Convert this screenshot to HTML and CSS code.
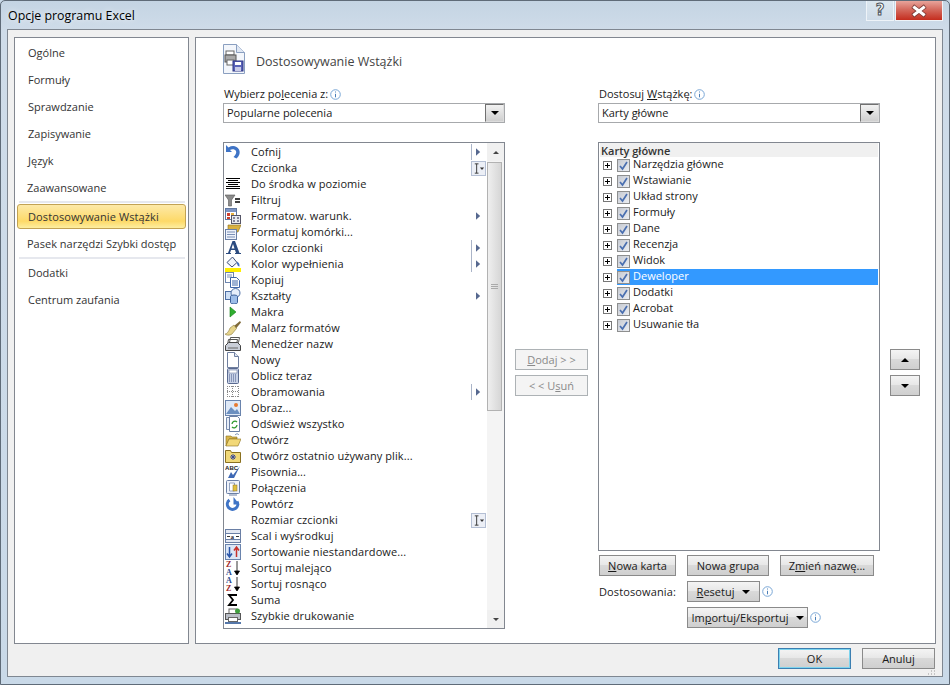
FILE: index.html
```html
<!DOCTYPE html>
<html lang="pl">
<head>
<meta charset="utf-8">
<title>Opcje programu Excel</title>
<link rel="stylesheet" href="styles.css">
</head>
<body>
<svg class="defs" aria-hidden="true">
  <symbol id="tri" viewBox="0 0 6 9"><path d="M0 0l5 4.500L0 9z" fill="#56688f"/></symbol>
  <symbol id="ibeam" viewBox="0 0 14 14"><path d="M3 2h4M3 12h4M5 2v10" stroke="#333" fill="none"/><path d="M8.500 6h4.500l-2.200 2.500z" fill="#333"/></symbol>
  <symbol id="info" viewBox="0 0 11 11"><circle cx="5.500" cy="5.500" r="4.800" fill="#fff" stroke="#7aa7d6"/><path d="M5.500 2.500v1M5.500 4.800v3.500" stroke="#4a7fb8"/></symbol>
  <symbol id="check" viewBox="0 0 11 11"><path d="M2 6l2.500 3L9 2" fill="none" stroke="#4a6fb0" stroke-width="1.700"/></symbol>
  <symbol id="plus" viewBox="0 0 9 9"><rect x=".5" y=".5" width="8" height="8" fill="#fff" stroke="#777"/><path d="M2 4.500h5M4.500 2v5" stroke="#000"/></symbol>
</svg>
<div class="window">
  <header class="titlebar">
    <div class="title">Opcje programu Excel</div>
    <div class="caption">
      <div class="cap-help">?</div>
      <div class="cap-close"><svg class="cap-x" viewBox="0 0 14 10"><path d="M2.500 1.500l9 7M11.500 1.500l-9 7" stroke="#7a3a35" stroke-width="4.500" stroke-linecap="square"/><path d="M2.500 1.500l9 7M11.500 1.500l-9 7" stroke="#fff" stroke-width="3" stroke-linecap="square"/></svg></div>
    </div>
  </header>
  <div class="client">
    <div class="panels">
      <nav class="sidebar">
        <div class="nav-item">Ogólne</div>
        <div class="nav-item">Formuły</div>
        <div class="nav-item">Sprawdzanie</div>
        <div class="nav-item">Zapisywanie</div>
        <div class="nav-item">Język</div>
        <div class="nav-item nav-tight">Zaawansowane</div>
        <div class="nav-sep"></div>
        <div class="nav-selected">Dostosowywanie Wstążki</div>
        <div class="nav-item nav-tight nav-pasek">Pasek narzędzi Szybki dostęp</div>
        <div class="nav-sep"></div>
        <div class="nav-item">Dodatki</div>
        <div class="nav-item">Centrum zaufania</div>
      </nav>
      <main class="main">
        <div class="head">
          <svg class="head-icon" viewBox="0 0 22 30"><path d="M.5.500h13l8 8v21H.500z" fill="#f3f6fb" stroke="#8a9fc0"/><path d="M13.500.500v8h8" fill="#dfe7f3" stroke="#8a9fc0"/><rect x="3" y="7" width="8" height="4" fill="#fff" stroke="#666"/><rect x="2" y="11" width="11" height="7" fill="#a9a9a9" stroke="#555"/><rect x="4" y="16" width="7" height="5" fill="#fff" stroke="#666"/><rect x="10" y="17" width="10" height="10" fill="#5a63b8" stroke="#2d3585"/><rect x="12" y="18" width="6" height="3" fill="#fff"/><rect x="12" y="23" width="6" height="4" fill="#c9cce8"/></svg>
          <div class="head-text">Dostosowywanie Wstążki</div>
        </div>
        <div class="columns">
          <section class="col">
            <div class="label">Wybierz po<u>l</u>ecenia z:<svg class="info"><use href="#info"/></svg></div>
            <div class="combo"><span class="combo-text">Popularne polecenia</span><span class="combo-btn"><i class="down"></i></span></div>
            <div class="cmdlist">
              <div class="cmds">
                <div class="cmd"><svg class="ic" viewBox="0 0 16 16"><path d="M1 1v7h6L5 6c2-1.500 5-1 6 1 .8 2-.5 4-2.500 6l3 1.500c3-2.500 4-6 2.500-9C12 2 7.500 1 3.500 3.500z" fill="#3f74c6"/></svg><span>Cofnij</span><span class="mark split"><svg class="tri"><use href="#tri"/></svg></span></div>
                <div class="cmd"><span class="ic"></span><span>Czcionka</span><span class="mark beam"><svg class="beam-ic"><use href="#ibeam"/></svg></span></div>
                <div class="cmd"><svg class="ic" viewBox="0 0 16 16"><path d="M1 2.500h14M3 4.500h10M1 6.500h14M3 8.500h10M1 10.500h14M1 12.500h14" stroke="#000"/></svg><span>Do środka w poziomie</span></div>
                <div class="cmd"><svg class="ic" viewBox="0 0 16 16"><path d="M0 3h10L6.500 8v6h-3V8z" fill="#8c8c8c" stroke="#555" stroke-width=".6"/><path d="M10 7h5M10 10h5" stroke="#000" stroke-width="1.400"/></svg><span>Filtruj</span></div>
                <div class="cmd"><svg class="ic" viewBox="0 0 16 16"><rect x=".5" y=".5" width="11" height="11" fill="#fff" stroke="#6077a0"/><path d="M1 1h10v3H1z" fill="#7d95c4"/><path d="M2 5h3v3H2z" fill="#d04030"/><path d="M6 5h3v3H6z" fill="#e8b040"/><path d="M2 9h3v2H2z" fill="#c8402f"/><rect x="6.500" y="7.500" width="9" height="8" fill="#e8ebf0" stroke="#556"/><path d="M8 10h2M8 13h2M12 10h2M12 13h2" stroke="#224"/></svg><span>Formatow. warunk.</span><span class="mark"><svg class="tri"><use href="#tri"/></svg></span></div>
                <div class="cmd"><svg class="ic" viewBox="0 0 16 16"><path d="M3 1l13 0-3 7H3z" fill="#d8b040" stroke="#8a7020" stroke-width=".6"/><rect x=".5" y="5.500" width="11" height="10" fill="#eef2fa" stroke="#6a7fa5"/><path d="M2 8h8M2 10.500h8M2 13h8" stroke="#7a8fb5"/></svg><span>Formatuj komórki...</span></div>
                <div class="cmd"><svg class="ic" viewBox="0 0 16 16"><path d="M1 14h5v-1H5l1-3h4l1 3h-1v1h6v-1h-1.500L10 1H7.500L3 13H1zM6.500 8.500L8 4l1.500 4.500z" fill="#2a4a7f" fill-rule="evenodd"/></svg><span>Kolor czcionki</span><span class="mark split"><svg class="tri"><use href="#tri"/></svg></span></div>
                <div class="cmd"><svg class="ic" viewBox="0 0 16 16"><path d="M2 6.500L7.500 1 12 6.500 7 11z" fill="#eef3fa" stroke="#3f4f78"/><path d="M12 5.500c2.500 1.500 2.500 3 2.500 5-1.500 0-3-2-2.500-5z" fill="#3f6fc0"/><rect y="12" width="16" height="4" fill="#ffef00"/></svg><span>Kolor wypełnienia</span><span class="mark split"><svg class="tri"><use href="#tri"/></svg></span></div>
                <div class="cmd"><svg class="ic" viewBox="0 0 16 16"><rect x=".5" y=".5" width="8" height="10" fill="#fff" stroke="#6e86b0"/><path d="M2 3h5M2 5h5" stroke="#7a8fb5"/><path d="M5.500 5.500h6l3 3v7h-9z" fill="#fff" stroke="#3f66a8"/><path d="M7 9h6M7 11h6M7 13h6" stroke="#3f66a8"/></svg><span>Kopiuj</span></div>
                <div class="cmd"><svg class="ic" viewBox="0 0 16 16"><rect x=".5" y="3.500" width="9" height="8" fill="#cfe0f5" stroke="#4d6fa5"/><circle cx="10.500" cy="5" r="4.500" fill="#e6eefa" stroke="#4d6fa5"/><path d="M5.500 8.500a3.500 1.500 0 0 1 7 0v6a3.500 1.500 0 0 1-7 0z" fill="#9dbde8" stroke="#3d5f98"/></svg><span>Kształty</span><span class="mark"><svg class="tri"><use href="#tri"/></svg></span></div>
                <div class="cmd"><svg class="ic" viewBox="0 0 16 16"><path d="M5 3l6 5-6 5z" fill="#2fae2f" stroke="#14801a" stroke-width=".6"/></svg><span>Makra</span></div>
                <div class="cmd"><svg class="ic" viewBox="0 0 16 16"><path d="M9 6L15 1l1 1.500-5 6z" fill="#7f6a3a"/><path d="M9 5l2.500 3.500L7 14C4 16 1 15 0 14c2 0 4-3 5-6z" fill="#e6d48c" stroke="#8a7a3a" stroke-width=".6"/></svg><span>Malarz formatów</span></div>
                <div class="cmd"><svg class="ic" viewBox="0 0 16 16"><path d="M5.500 1.500h9l-1 5h-9zM3.500 3.500h9l-1 5h-9z" fill="#fff" stroke="#555"/><path d="M.5 9.500l3-3h9l3 3v5H.500z" fill="#c9ced8" stroke="#444"/><path d="M3 12h10" stroke="#666"/></svg><span>Menedżer nazw</span></div>
                <div class="cmd"><svg class="ic" viewBox="0 0 16 16"><path d="M2.500.5h7l4 4v11h-11z" fill="#fff" stroke="#6f7f9f"/><path d="M9.500.5v4h4" fill="#dfe6f2" stroke="#6f7f9f"/></svg><span>Nowy</span></div>
                <div class="cmd"><svg class="ic" viewBox="0 0 16 16"><rect x="2.500" y=".5" width="11" height="15" rx="1" fill="#c8d2e6" stroke="#5a6a90"/><rect x="4" y="2" width="8" height="3" fill="#fff" stroke="#5a6a90" stroke-width=".5"/><path d="M4 7h8M4 9h8M4 11h8M4 13h8" stroke="#46598a" stroke-dasharray="1 1"/></svg><span>Oblicz teraz</span></div>
                <div class="cmd"><svg class="ic" viewBox="0 0 16 16"><path d="M2 2.500h12M2 7.500h12M2 12.500h12M2.500 2v11M7.500 2v11M13.500 2v11" stroke="#8a8a8a" stroke-dasharray="1 1"/></svg><span>Obramowania</span><span class="mark split"><svg class="tri"><use href="#tri"/></svg></span></div>
                <div class="cmd"><svg class="ic" viewBox="0 0 16 16"><rect x=".5" y=".5" width="15" height="15" fill="#dfe9f7" stroke="#6a84ad"/><circle cx="11" cy="5" r="2" fill="#e87a30"/><path d="M1 14l5-7 4 4 2-2 3 5z" fill="#6b8fc0"/></svg><span>Obraz...</span></div>
                <div class="cmd"><svg class="ic" viewBox="0 0 16 16"><path d="M1.500 1.500h6v12h-6z" fill="#e8eef8" stroke="#7a8dae"/><path d="M4.500.5h8l2 2v13h-10z" fill="#fff" stroke="#6a7fa5"/><path d="M7 8a3 3 0 0 1 5-2M12 9a3 3 0 0 1-5 2" fill="none" stroke="#2f9a2f" stroke-width="1.300"/></svg><span>Odśwież wszystko</span></div>
                <div class="cmd"><svg class="ic" viewBox="0 0 16 16"><path d="M1 14V4h5l1 1h5v2H4l-3 7z" fill="#d8b54a" stroke="#8a7020" stroke-width=".6"/><path d="M1 14l3-7h12l-3 7z" fill="#f2d878" stroke="#8a7020" stroke-width=".6"/><path d="M10 3c2-2 3-1 4 0" fill="none" stroke="#6a84ad"/></svg><span>Otwórz</span></div>
                <div class="cmd"><svg class="ic" viewBox="0 0 16 16"><path d="M.5 14.500v-12h5l1 2h9v10z" fill="#f0d878" stroke="#8a7020"/><path d="M8 6v6M5 9h6M6 7l4 4M10 7l-4 4" stroke="#3a4a9a"/></svg><span>Otwórz ostatnio używany plik...</span></div>
                <div class="cmd"><svg class="ic" viewBox="0 0 16 16"><path d="M3 14L6 8l2 3 7-9-6 12z" fill="#3f69b5"/><text class="abc" x="0" y="6">ABC</text></svg><span>Pisownia...</span></div>
                <div class="cmd"><svg class="ic" viewBox="0 0 16 16"><rect x="1.500" y=".5" width="13" height="13" rx="1" fill="#eef2fa" stroke="#6a7fa5"/><path d="M4.500 3h5v8h-5z" fill="#fff" stroke="#6a7fa5" stroke-width=".7"/><rect x="8" y="5" width="4" height="6" fill="#e0c040" stroke="#8a7020" stroke-width=".5"/><path d="M4 15h8" stroke="#6a7fa5"/></svg><span>Połączenia</span></div>
                <div class="cmd"><svg class="ic" viewBox="0 0 16 16"><path d="M4.500 4A5.200 5.200 0 1 0 12 5.500" fill="none" stroke="#3f74c6" stroke-width="3"/><path d="M8.500 1v7.500h6z" fill="#3f74c6"/></svg><span>Powtórz</span></div>
                <div class="cmd"><span class="ic"></span><span>Rozmiar czcionki</span><span class="mark beam"><svg class="beam-ic"><use href="#ibeam"/></svg></span></div>
                <div class="cmd"><svg class="ic" viewBox="0 0 16 16"><rect x=".5" y="1.500" width="15" height="13" fill="#e3e8f2" stroke="#6a7fa5"/><path d="M1 5.500h14M1 11.500h14" stroke="#6a7fa5"/><rect x="1" y="6" width="14" height="5" fill="#fff"/><path d="M2 8.500h3M11 8.500h3" stroke="#333"/><text class="tiny" x="5.500" y="10.500">a</text></svg><span>Scal i wyśrodkuj</span></div>
                <div class="cmd"><svg class="ic" viewBox="0 0 16 16"><rect x=".5" y=".5" width="15" height="15" fill="#dbe6f6" stroke="#6a84ad"/><path d="M4.500 3v9M2 9.500L4.500 13 7 9.500" fill="none" stroke="#2a55a8" stroke-width="1.500"/><path d="M11.500 13V4M9 6.500L11.500 3 14 6.500" fill="none" stroke="#c8302a" stroke-width="1.500"/></svg><span>Sortowanie niestandardowe...</span></div>
                <div class="cmd"><svg class="ic" viewBox="0 0 16 16"><text class="sort sort-r" x="1" y="7">Z</text><text class="sort sort-b" x="1" y="15">A</text><path d="M12 1v13M9.500 11l2.500 4 2.500-4z" stroke="#000" stroke-width=".8"/></svg><span>Sortuj malejąco</span></div>
                <div class="cmd"><svg class="ic" viewBox="0 0 16 16"><text class="sort sort-b" x="1" y="7">A</text><text class="sort sort-r" x="1" y="15">Z</text><path d="M12 1v13M9.500 11l2.500 4 2.500-4z" stroke="#000" stroke-width=".8"/></svg><span>Sortuj rosnąco</span></div>
                <div class="cmd"><svg class="ic" viewBox="0 0 16 16"><path d="M12 3H4l4 5-4 5h8" fill="none" stroke="#000" stroke-width="1.800"/></svg><span>Suma</span></div>
                <div class="cmd"><svg class="ic" viewBox="0 0 16 16"><rect x="4" y="1" width="8" height="5" fill="#fff" stroke="#666"/><rect x=".5" y="5.500" width="15" height="6" fill="#b8bdc6" stroke="#555"/><rect x="3.500" y="9.500" width="9" height="4" fill="#fff" stroke="#666"/><circle cx="12.500" cy="3" r="2.500" fill="#3fa03f"/><path d="M0 15h16" stroke="#5577aa" stroke-width="2"/></svg><span>Szybkie drukowanie</span></div>
              </div>
              <div class="scrollbar">
                <div class="sb-btn"><i class="sb-up"></i></div>
                <div class="sb-track"><div class="sb-thumb"><i class="sb-grip"></i></div></div>
                <div class="sb-btn"><i class="sb-down"></i></div>
              </div>
            </div>
          </section>
          <section class="col-mid">
            <button class="btn btn-wide btn-off"><span><u>D</u>odaj &gt; &gt;</span></button>
            <button class="btn btn-wide btn-off"><span>&lt; &lt; U<u>s</u>uń</span></button>
          </section>
          <section class="col">
            <div class="label">Dostosuj <u>W</u>stążkę:<svg class="info"><use href="#info"/></svg></div>
            <div class="combo"><span class="combo-text">Karty główne</span><span class="combo-btn"><i class="down"></i></span></div>
            <div class="tree">
              <div class="tree-head">Karty główne</div>
              <div class="node"><svg class="plus"><use href="#plus"/></svg><div class="node-body"><span class="cb"><svg class="cb-ic"><use href="#check"/></svg></span><span class="node-text">Narzędzia główne</span></div></div>
              <div class="node"><svg class="plus"><use href="#plus"/></svg><div class="node-body"><span class="cb"><svg class="cb-ic"><use href="#check"/></svg></span><span class="node-text">Wstawianie</span></div></div>
              <div class="node"><svg class="plus"><use href="#plus"/></svg><div class="node-body"><span class="cb"><svg class="cb-ic"><use href="#check"/></svg></span><span class="node-text">Układ strony</span></div></div>
              <div class="node"><svg class="plus"><use href="#plus"/></svg><div class="node-body"><span class="cb"><svg class="cb-ic"><use href="#check"/></svg></span><span class="node-text">Formuły</span></div></div>
              <div class="node"><svg class="plus"><use href="#plus"/></svg><div class="node-body"><span class="cb"><svg class="cb-ic"><use href="#check"/></svg></span><span class="node-text">Dane</span></div></div>
              <div class="node"><svg class="plus"><use href="#plus"/></svg><div class="node-body"><span class="cb"><svg class="cb-ic"><use href="#check"/></svg></span><span class="node-text">Recenzja</span></div></div>
              <div class="node"><svg class="plus"><use href="#plus"/></svg><div class="node-body"><span class="cb"><svg class="cb-ic"><use href="#check"/></svg></span><span class="node-text">Widok</span></div></div>
              <div class="node"><svg class="plus"><use href="#plus"/></svg><div class="node-body node-sel"><span class="cb"><svg class="cb-ic"><use href="#check"/></svg></span><span class="node-text">Deweloper</span></div></div>
              <div class="node"><svg class="plus"><use href="#plus"/></svg><div class="node-body"><span class="cb"><svg class="cb-ic"><use href="#check"/></svg></span><span class="node-text">Dodatki</span></div></div>
              <div class="node"><svg class="plus"><use href="#plus"/></svg><div class="node-body"><span class="cb"><svg class="cb-ic"><use href="#check"/></svg></span><span class="node-text">Acrobat</span></div></div>
              <div class="node"><svg class="plus"><use href="#plus"/></svg><div class="node-body"><span class="cb"><svg class="cb-ic"><use href="#check"/></svg></span><span class="node-text">Usuwanie tła</span></div></div>
            </div>
            <div class="btn-row">
              <button class="btn btn-karta"><span><u>N</u>owa karta</span></button>
              <button class="btn btn-grupa"><span>Nowa <u>g</u>rupa</span></button>
              <button class="btn btn-zmien"><span>Z<u>m</u>ień nazwę...</span></button>
            </div>
            <div class="custom-row">
              <span class="custom-label">Dostosowania:</span>
              <button class="btn btn-reset"><span><u>R</u>esetuj</span><i class="down"></i></button>
              <svg class="info info-btn"><use href="#info"/></svg>
            </div>
            <div class="custom-row custom-second">
              <button class="btn btn-import"><span>Im<u>p</u>ortuj/Eksportuj</span><i class="down"></i></button>
              <svg class="info info-btn"><use href="#info"/></svg>
            </div>
          </section>
          <section class="col-arrows">
            <button class="btn btn-arrow"><i class="up"></i></button>
            <button class="btn btn-arrow"><i class="down"></i></button>
          </section>
        </div>
      </main>
    </div>
    <footer class="actions">
      <button class="btn btn-action btn-default">OK</button>
      <button class="btn btn-action">Anuluj</button>
      <svg class="grip" viewBox="0 0 10 10"><path d="M8 2h1M5 5h1M8 5h1M2 8h1M5 8h1M8 8h1" stroke="#999"/></svg>
    </footer>
  </div>
</div>
</body>
</html>
```
FILE: styles.css
```css
* { box-sizing: border-box; }
html, body { margin: 0; padding: 0; }
body { font: 11px/16px "Open Sans", sans-serif; color: #1a1a1a; background: #c9d9e8; overflow: hidden; }
u { text-decoration: underline; text-underline-offset: 1px; }
.defs { display: none; }

.window { width: 950px; height: 685px; display: flex; flex-direction: column; border: 1px solid #5f6b78; border-radius: 5px 5px 0 0; background: linear-gradient(#c4d4e3, #cfdce9 30px, #c9d9e8); padding: 0 6px 7px; }
.titlebar { height: 28px; display: flex; justify-content: space-between; flex: none; }
.title { font-size: 12.400px; line-height: 29px; color: #000; margin-left: 1px; text-shadow: 0 0 6px #fff; }
.caption { display: flex; height: 20px; }
.cap-help { width: 28px; height: 20px; margin-right: 1px; border: 1px solid #eef3f8; border-top: 0; background: linear-gradient(#dbe6ef, #cfdce8); color: #fff; -webkit-text-stroke: 1px #4e5660; font: bold 15px/18px "DejaVu Sans", sans-serif; text-align: center; }
.cap-close { width: 48px; height: 20px; border: 1px solid #eef3f8; border-top: 0; background: linear-gradient(#e8a49b, #d46a5e 45%, #c42d1e); display: flex; align-items: center; justify-content: center; }
.cap-x { width: 14px; height: 10px; overflow: visible; }

.client { flex: 1; display: flex; flex-direction: column; background: #f0f0f0; border: 1px solid #7f8791; padding: 7px 6px 0; min-height: 0; }
.panels { display: flex; gap: 6px; height: 607px; flex: none; }

.sidebar { width: 175px; flex: none; background: #fff; border: 1px solid #828790; padding-top: 1px; }
.nav-item { height: 27px; line-height: 27px; padding-left: 13px; color: #333; }
.nav-tight { padding-left: 12px; }
.nav-sep { height: 2px; background: #e6e8ee; margin: 0 3px 0 4px; }
.nav-selected { height: 25px; line-height: 23px; margin: 1px 2px 0 2px; padding-left: 10px; border: 1px solid #c2a253; border-radius: 3px; background: linear-gradient(#fde9a8, #fdd968 70%, #fdeea0); color: #333; letter-spacing: .1px; }
.nav-pasek { margin-top: 1px; }

.main { flex: 1; background: #fff; border: 1px solid #828790; padding: 6px 0 0 27px; }
.head { height: 30px; display: flex; align-items: center; margin-bottom: 11px; }
.head-icon { width: 22px; height: 30px; margin-right: 11px; }
.head-text { font-size: 12.500px; color: #444; padding-top: 5px; }
.columns { display: flex; gap: 10px; }
.col { width: 282px; flex: none; display: flex; flex-direction: column; }
.col-mid { width: 73px; flex: none; padding-top: 264px; display: flex; flex-direction: column; gap: 5px; }
.col-arrows { width: 30px; flex: none; padding-top: 264px; display: flex; flex-direction: column; gap: 5px; }

.label { height: 16px; margin-left: 1px; padding-top: 2px; color: #1a1a1a; display: flex; align-items: center; white-space: pre-wrap; }
.info { width: 11px; height: 11px; margin-left: 2px; flex: none; }
.combo { height: 20px; margin-top: 2px; border: 1px solid #a7a9ac; display: flex; justify-content: space-between; align-items: stretch; }
.combo-text { padding-left: 3px; line-height: 18px; }
.combo-btn { width: 19px; background: linear-gradient(#f2f2f2, #cfcfcf); border: 1px solid #707070; border-right-color: #ddd; border-bottom-color: #ddd; display: flex; align-items: center; justify-content: center; }
.down { display: block; width: 0; height: 0; border: 4px solid transparent; border-top: 4px solid #000; border-bottom: 0; }
.up { display: block; width: 0; height: 0; border: 4px solid transparent; border-bottom: 4px solid #000; border-top: 0; }

.cmdlist { height: 487px; margin-top: 19px; border: 1px solid #828790; display: flex; }
.cmds { flex: 1; padding-top: 1px; min-width: 0; }
.cmd { height: 16px; display: flex; align-items: center; padding-left: 1px; color: #1a1a1a; letter-spacing: .09px; }
.ic { width: 16px; height: 16px; margin-right: 10px; flex: none; display: block; }
.mark { margin-left: auto; width: 16px; height: 16px; display: flex; align-items: center; padding-left: 5px; flex: none; }
.split { border-left: 1px solid #aab4c8; padding-left: 4px; }
.tri { width: 5px; height: 8px; }
.beam { padding: 0; width: 15px; margin-right: 1px; height: 15px; border: 1px solid #b4bfd4; background: #eceff6; }
.beam-ic { width: 13px; height: 13px; }
.abc { font: bold 6px "Liberation Sans", sans-serif; fill: #222; }
.tiny { font: bold 7px "Liberation Serif", serif; fill: #223; }
.sort { font: bold 8px "Liberation Serif", serif; }
.sort-r { fill: #9e2a2a; }
.sort-b { fill: #2a4a8f; }

.scrollbar { width: 17px; flex: none; display: flex; flex-direction: column; background: #f4f4f4; }
.sb-btn { height: 18px; flex: none; display: flex; align-items: center; justify-content: center; background: #f0f0f0; }
.sb-up { display: block; width: 0; height: 0; border: 3px solid transparent; border-bottom: 3px solid #444; border-top: 0; }
.sb-down { display: block; width: 0; height: 0; border: 3px solid transparent; border-top: 3px solid #444; border-bottom: 0; }
.sb-track { flex: 1; }
.sb-thumb { height: 249px; margin: 1px 2px 0 0; border: 1px solid #b2b2b2; background: linear-gradient(90deg, #efefef, #d6d6d6); display: flex; align-items: center; justify-content: center; }
.sb-grip { display: block; width: 7px; height: 5px; border-top: 1px solid #aaa; border-bottom: 1px solid #aaa; background: linear-gradient(transparent 1px, #aaa 1px, #aaa 2px, transparent 2px); }

.tree { height: 409px; margin-top: 19px; border: 1px solid #828790; padding: 0 1px; color: #1a1a1a; }
.tree-head { height: 14px; line-height: 15px; padding-left: 1px; background: #f0f0f0; font-weight: 600; color: #333; }
.node { height: 16px; display: flex; align-items: center; padding-left: 3px; }
.plus { width: 9px; height: 9px; margin-right: 5px; flex: none; }
.node-body { flex: 1; height: 16px; display: flex; align-items: center; gap: 3px; }
.node-text { padding-bottom: 2px; }
.node-sel { background: #3399ff; color: #fff; }
.cb { width: 13px; height: 13px; border: 1px solid #8e8f8f; background: linear-gradient(135deg, #c6cad2, #eceef2); display: flex; flex: none; align-items: center; justify-content: center; }
.cb-ic { width: 11px; height: 11px; }

.btn { height: 21px; padding: 0; font: 11px/16px "Open Sans", sans-serif; color: #1a1a1a; border: 1px solid #8a8a8a; background: linear-gradient(#f4f4f4, #e8e8e8 45%, #d9d9d9 50%, #cfcfcf); display: flex; align-items: center; justify-content: center; }
.btn-wide { width: 73px; }
.btn-off { color: #8a8a8a; background: #f4f4f4; border-color: #adb2b5; }
.btn-arrow { width: 30px; }
.btn-row { display: flex; margin-top: 4px; padding-left: 1px; }
.btn-karta { width: 77px; }
.btn-grupa { width: 82px; margin-left: 11px; }
.btn-zmien { width: 94px; margin-left: 11px; }
.custom-row { display: flex; align-items: center; margin-top: 5px; padding-left: 1px; }
.custom-label { width: 88px; letter-spacing: .12px; }
.custom-second { padding-left: 89px; }
.btn-reset { width: 73px; gap: 8px; }
.btn-import { width: 121px; gap: 7px; }

.actions { flex: 1; display: flex; justify-content: flex-end; gap: 11px; padding: 4px 1px 0 0; position: relative; }
.btn-action { width: 73px; height: 21px; }
.btn-default { border: 1px solid #3c7fb1; box-shadow: inset 0 0 0 1px #7ed4ee; }
.grip { width: 10px; height: 10px; position: absolute; right: 0; bottom: 0; }
```
